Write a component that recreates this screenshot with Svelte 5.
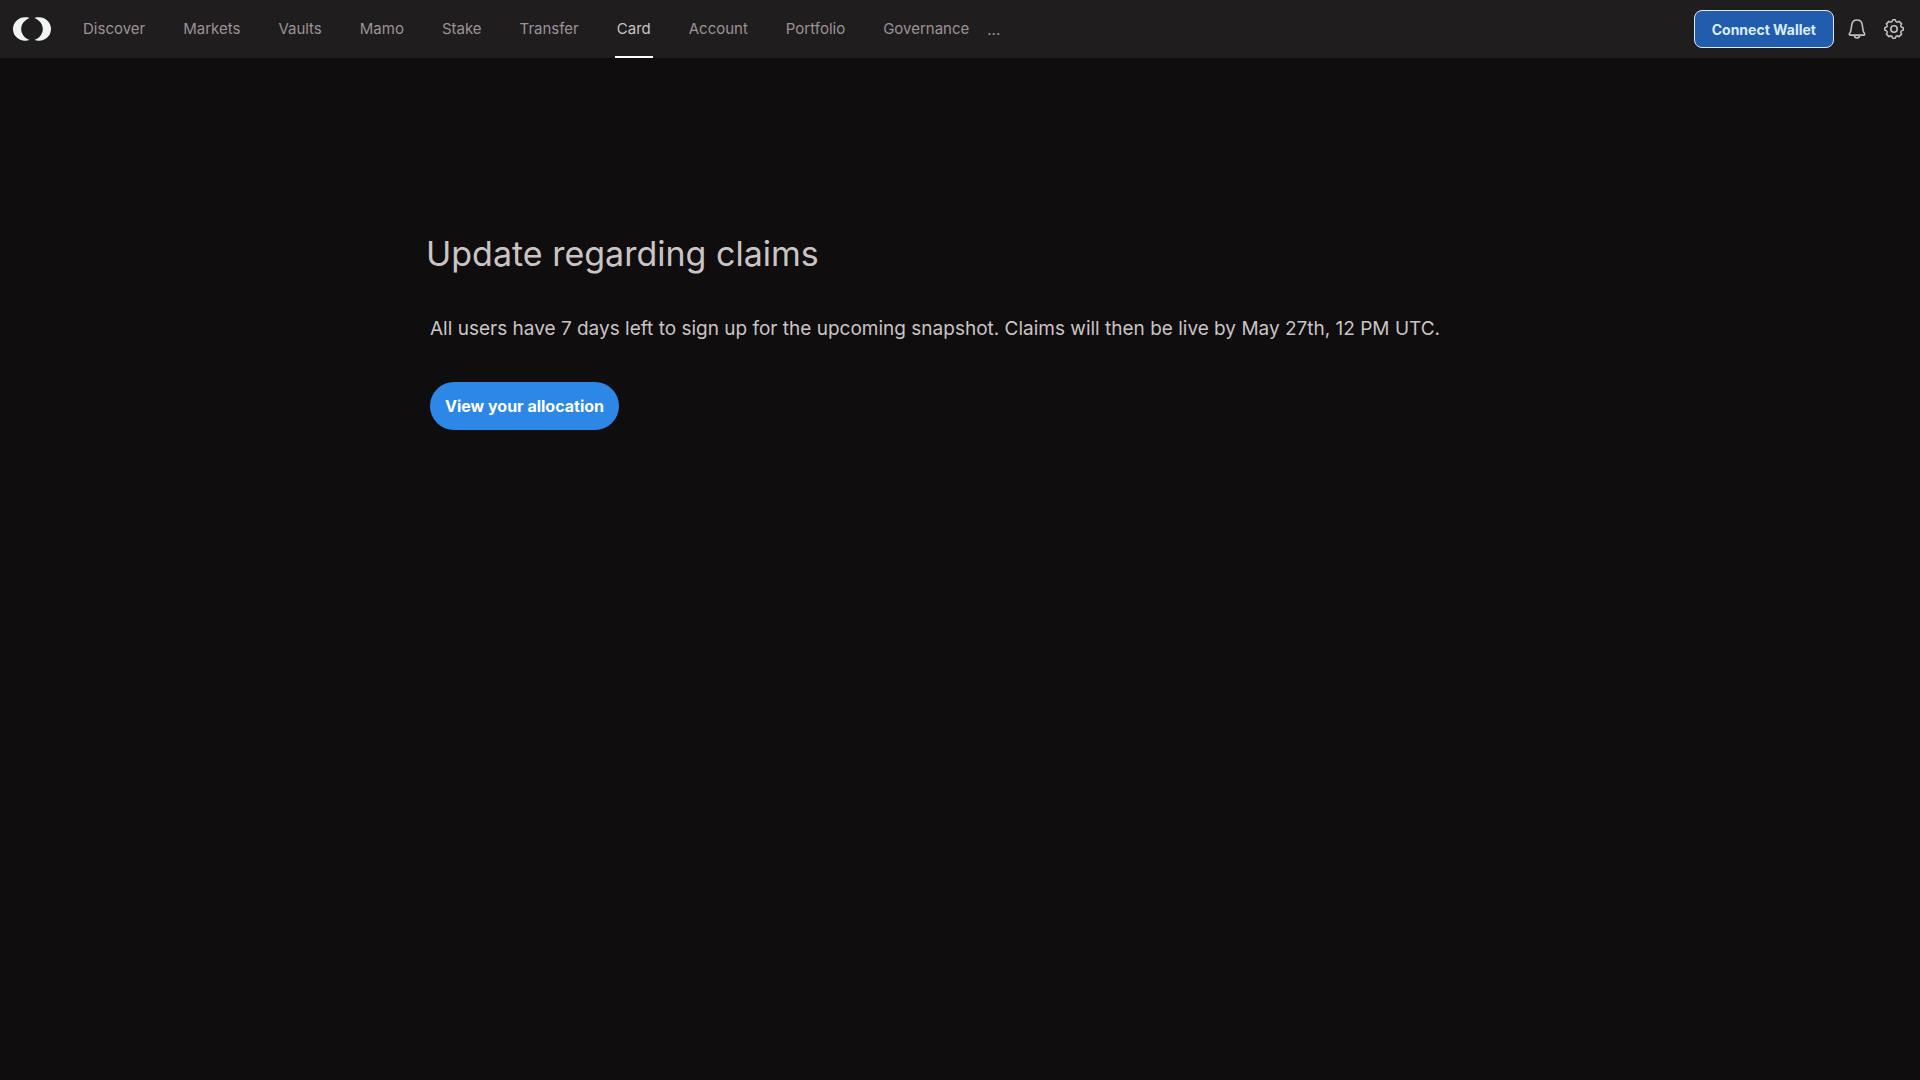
<script lang="ts">
  const links = [
    'Discover',
    'Markets',
    'Vaults',
    'Mamo',
    'Stake',
    'Transfer',
    'Card',
    'Account',
    'Portfolio',
    'Governance'
  ];
  let active = $state('Card');
</script>

<header class="topbar">
  <a class="logo" href="#home" aria-label="Home">
    <svg width="38" height="24" viewBox="0 0 38 24">
      <path d="M16.5 .9 C14.8 .3 13.4 .2 12 .2 A12 11.8 0 0 0 12 23.8 C13.4 23.8 14.8 23.7 16.5 23.1 C10.8 20.6 8.2 16.4 8.2 12 C8.2 7.6 10.8 3.4 16.5 .9 Z" />
      <path d="M21.5 .9 C23.2 .3 24.6 .2 26 .2 A12 11.8 0 0 1 26 23.8 C24.6 23.8 23.2 23.7 21.5 23.1 C27.2 20.6 29.8 16.4 29.8 12 C29.8 7.6 27.2 3.4 21.5 .9 Z" />
    </svg>
  </a>

  <nav class="links">
    {#each links as link}
      <a
        href="#{link.toLowerCase()}"
        class="link"
        class:active={active === link}
        onclick={() => (active = link)}
      >
        {link}
      </a>
    {/each}
    <button class="more" aria-label="More">...</button>
  </nav>

  <div class="actions">
    <button class="connect">Connect Wallet</button>
    <button class="icon" aria-label="Notifications">
      <svg width="20" height="20" viewBox="0 0 20 20">
        <path d="M10 1 C7.1 1 5.2 3 4.8 5.6 L3.9 11.4 Q3.7 12.6 2.6 14.4 C2 15.5 2.3 16.1 3.2 16.1 H16.8 C17.7 16.1 18 15.5 17.4 14.4 Q16.3 12.6 16.1 11.4 L15.2 5.6 C14.8 3 12.9 1 10 1 Z" />
        <path d="M7.2 16.2 C7.4 18.2 8.5 19 10 19 C11.5 19 12.6 18.2 12.8 16.2" />
      </svg>
    </button>
    <button class="icon" aria-label="Settings">
      <svg width="20" height="20" viewBox="0 0 20 20">
        <path d="M8.7 .8 H11.3 Q11.8 3.1 13.1 3.1 Q14 3.1 15.1 2.4 L17.6 4.9 Q16.4 6.7 16.9 7.5 Q17.2 8.3 19.2 8.7 V11.3 Q17.2 11.7 16.9 12.5 Q16.4 13.3 17.6 15.1 L15.1 17.6 Q14 16.9 13.1 16.9 Q11.8 16.9 11.3 19.2 H8.7 Q8.2 16.9 6.9 16.9 Q6 16.9 4.9 17.6 L2.4 15.1 Q3.6 13.3 3.1 12.5 Q2.8 11.7 .8 11.3 V8.7 Q2.8 8.3 3.1 7.5 Q3.6 6.7 2.4 4.9 L4.9 2.4 Q6 3.1 6.9 3.1 Q8.2 3.1 8.7 .8 Z" />
        <circle cx="10" cy="10" r="3.2" />
      </svg>
    </button>
  </div>
</header>

<main class="content">
  <h1>Update regarding claims</h1>
  <p>
    All users have 7 days left to sign up for the upcoming snapshot. Claims will then be live by
    May 27th, 12 PM UTC.
  </p>
  <button class="allocation">View your allocation</button>
</main>

<style>
  :global(body) {
    background: #0f0d0e;
    color: #cac4c5;
    font-family: Inter, 'Liberation Sans', sans-serif;
  }

  button {
    font-family: inherit;
    cursor: pointer;
  }

  .topbar {
    display: flex;
    align-items: center;
    height: 58px;
    padding: 0 12px;
    background: #1f1d1e;
  }

  .logo {
    display: flex;
    margin: 0 30px 0 1px;
  }

  .logo path {
    fill: #f0f3f3;
  }

  .links {
    display: flex;
    align-items: stretch;
    align-self: stretch;
    gap: 34px;
  }

  .link {
    display: flex;
    align-items: center;
    box-sizing: border-box;
    padding: 0 2px;
    border-bottom: 2px solid transparent;
    color: #9e9297;
    font-size: 15px;
    text-decoration: none;
  }

  .link.active {
    color: #cac4c5;
    border-bottom-color: #fff;
  }

  .more {
    margin-left: -20px;
    padding: 0 2px;
    border: 0;
    background: none;
    color: #9e9297;
    font-size: 15px;
  }

  .actions {
    display: flex;
    align-items: center;
    margin-left: auto;
    gap: 9px;
  }

  .connect {
    height: 38px;
    padding: 0 17px;
    border: 1px solid #d9edff;
    border-radius: 8px;
    background: #225cad;
    color: #d9edff;
    font-size: 14px;
    font-weight: 700;
  }

  .icon {
    display: flex;
    padding: 4px;
    border: 0;
    background: none;
  }

  .icon svg {
    fill: none;
    stroke: #c4bec0;
    stroke-width: 1.6;
    stroke-linejoin: round;
  }

  .content {
    max-width: 1060px;
    margin: 0 auto;
    padding: 168px 0 0;
  }

  h1 {
    margin: 0 0 33px -4px;
    font-size: 34px;
    font-weight: 400;
    line-height: 56px;
  }

  p {
    margin: 0 0 39px;
    font-size: 19px;
    line-height: 28px;
  }

  .allocation {
    height: 48px;
    padding: 0 15px;
    border: 0;
    border-radius: 24px;
    background: #2d87e6;
    color: #fff;
    font-size: 16px;
    font-weight: 700;
  }
</style>
